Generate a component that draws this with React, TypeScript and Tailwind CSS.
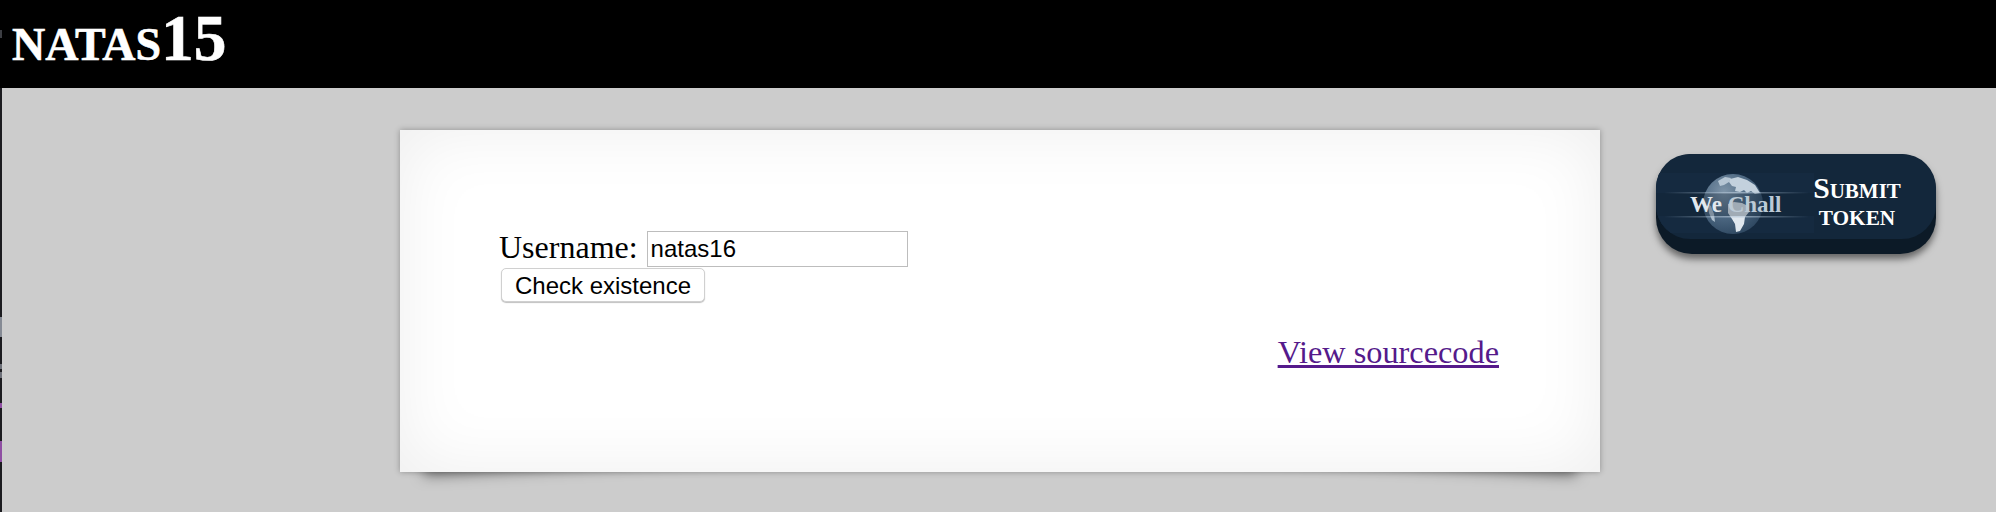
const stripSegments = [
    { h: 30, color: "#000000" },
    { h: 8, color: "#3c3e43" },
    { h: 50, color: "#000000" },
    { h: 229, color: "#1b1b1f" },
    { h: 20, color: "#858a94" },
    { h: 27, color: "#1b1b1f" },
    { h: 5, color: "#6d7079" },
    { h: 3, color: "#1b1b1f" },
    { h: 6, color: "#6d7079" },
    { h: 25, color: "#1b1b1f" },
    { h: 5, color: "#8f4fa3" },
    { h: 33, color: "#1b1b1f" },
    { h: 21, color: "#8f4fa3" },
    { h: 50, color: "#1b1b1f" },
];

function WechallBadge() {
    return (
        <a href="#" className="relative mt-[24px] ml-[56px] block h-[100px] w-[280px] shrink-0 rounded-[36px] bg-[#0c1a27] shadow-[0_5px_7px_rgba(0,0,0,0.5)]">
            <div className="absolute inset-x-0 top-0 h-[85px] overflow-hidden rounded-[34px] bg-[#13273b]">
                <svg viewBox="0 0 158 85" className="absolute top-0 left-0 h-[85px] w-[158px]">
                    <defs>
                        <radialGradient id="globe" cx="0.35" cy="0.3" r="0.85">
                            <stop offset="0" stopColor="#7f95a9" />
                            <stop offset="0.5" stopColor="#4c6781" />
                            <stop offset="1" stopColor="#263f58" />
                        </radialGradient>
                        <linearGradient id="flare" x1="0" x2="1" y1="0" y2="0">
                            <stop offset="0" stopColor="#9fb4c8" stopOpacity="0" />
                            <stop offset="0.5" stopColor="#b6c7d7" stopOpacity="0.7" />
                            <stop offset="1" stopColor="#9fb4c8" stopOpacity="0" />
                        </linearGradient>
                    </defs>
                    <rect x="0" y="19" width="158" height="60" fill="#152a40" />
                    <circle cx="77" cy="50" r="30" fill="url(#globe)" />
                    <path d="M62 27l7-4 6 1-2 4-5 3-4 1z" fill="#b6c6d4" />
                    <path d="M74 25l8-2 9 3 8 5 5 8-5 1-4-3-4 2-3-3-4 2-5-1 1-4-4-1-3-4z" fill="#c3d1dd" />
                    <path d="M72 50l6-2 8 1 6 3 1 6-4 5-1 7-4 7-4 1-1-8-3-5-4-6z" fill="#dfe7ee" />
                    <path d="M52 50l3 2 3 8 1 8-3-2-3-7z" fill="#aebfce" />
                    <rect x="0" y="39" width="158" height="23" fill="#0f2133" fillOpacity="0.3" />
                    <rect x="8" y="38" width="145" height="1.5" fill="url(#flare)" />
                    <rect x="8" y="62" width="145" height="1.5" fill="url(#flare)" />
                </svg>
                <span className="absolute top-[37px] left-[34px] font-['Liberation_Serif',serif] text-[23px] leading-[28px] font-bold whitespace-nowrap text-[#e2e8ee]">
                    We <span className="text-[#bccad6]">Chall</span>
                </span>
                <div className="absolute top-[15px] left-[157px] w-[88px] text-center font-['Liberation_Serif',serif] font-bold text-white">
                    <div className="text-[29.7px] leading-[38px] whitespace-nowrap [font-variant:small-caps]">Submit</div>
                    <div className="mt-[-2px] text-[21.3px] leading-[26px]">TOKEN</div>
                </div>
            </div>
        </a>
    );
}

export default function App() {
    return (
        <div className="isolate flex h-[512px] w-[1996px] overflow-hidden bg-[#cccccc]">
            <div className="flex w-[2px] shrink-0 flex-col">
                {stripSegments.map((seg, index) => (
                    <span key={index} className="block shrink-0" style={{ height: seg.h, backgroundColor: seg.color }} />
                ))}
            </div>
            <div className="min-w-0 flex-1">
                <h1 className="h-[88px] bg-black pl-[10px] font-['Liberation_Serif',serif] text-[65.5px] leading-[76px] font-bold text-white [-webkit-text-stroke:0.6px_white] [font-variant:small-caps]">
                    natas15
                </h1>
                <div className="flex items-start pt-[42px] pl-[398px]">
                    <div className="relative h-[342px] w-[1200px] shrink-0 bg-white pt-[101px] pl-[99px] font-['Liberation_Serif',serif] text-[32.3px] leading-[36px] text-black shadow-[inset_0_0_70px_rgba(0,0,0,0.07),0_0_6px_rgba(0,0,0,0.3)]">
                        <span className="absolute bottom-[22px] left-[22px] -z-10 h-[50px] w-[400px] -rotate-3 shadow-[0_15px_14px_rgba(0,0,0,0.5)]" />
                        <span className="absolute right-[22px] bottom-[22px] -z-10 h-[50px] w-[400px] rotate-3 shadow-[0_15px_14px_rgba(0,0,0,0.5)]" />
                        <form>
                            <div className="flex items-start">
                                <span className="text-[32px] leading-[32px]">Username:</span>
                                <input
                                    defaultValue="natas16"
                                    className="ml-[9px] h-[36px] w-[261px] border border-[#bdbdbd] bg-white px-[3px] font-['Liberation_Sans',sans-serif] text-[24px] text-black outline-none"
                                />
                            </div>
                            <button
                                type="button"
                                className="mt-px ml-[2px] block h-[34px] w-[204px] rounded-[5px] border border-[#d0d0d0] bg-white pt-px font-['Liberation_Sans',sans-serif] text-[24px] leading-[30px] text-black shadow-[0_1px_1px_rgba(0,0,0,0.25)]"
                            >
                                Check existence
                            </button>
                        </form>
                        <div className="mt-[32px] pr-[101px] text-right">
                            <a href="#" className="text-[#551a8b] underline">View sourcecode</a>
                        </div>
                    </div>
                    <WechallBadge />
                </div>
            </div>
        </div>
    );
}
